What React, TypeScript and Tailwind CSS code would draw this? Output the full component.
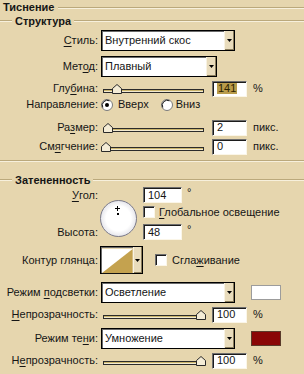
import React from "react";

const Etch = ({ className = "" }: { className?: string }) => (
  <div className={"h-[2px] border-t border-b border-t-[#bba97c] border-b-[#f7f0dc] " + className} />
);

const U = ({ pre = "", u, post = "" }: { pre?: string; u: string; post?: string }) => (
  <>
    {pre}
    <span className="underline underline-offset-2">{u}</span>
    {post}
  </>
);

const Label = ({ children }: { children: React.ReactNode }) => (
  <span className="w-[98px] shrink-0 text-right whitespace-nowrap">{children}</span>
);

const ArrowBtn = () => (
  <div className="w-[10px] h-full flex items-center justify-center bg-[#e9dcbc] border-l border-l-[#f8f2e2] shadow-[inset_-1px_-1px_0_#8a7d5c]">
    <svg width="5" height="3" viewBox="0 0 5 3">
      <path d="M0 0h5L2.5 3z" fill="#000" />
    </svg>
  </div>
);

const Select = ({ value, className }: { value: string; className: string }) => (
  <div className={"flex bg-white border border-black shadow-[inset_1px_1px_0_#6b6b6b] " + className}>
    <span className="flex-1 pl-[3px] flex items-center whitespace-nowrap overflow-hidden">{value}</span>
    <ArrowBtn />
  </div>
);

const Input = ({ children, className = "w-[35px]" }: { children: React.ReactNode; className?: string }) => (
  <div
    className={
      "h-[16px] bg-white flex items-center pl-[4px] border border-t-[#6e6e6e] border-l-[#6e6e6e] border-r-[#fbf6e8] border-b-[#fbf6e8] shadow-[inset_1px_1px_0_#1c1c1c] " +
      className
    }
  >
    {children}
  </div>
);

const Slider = ({ thumb }: { thumb: string }) => (
  <div className="relative w-[101px] h-[10px] ml-[2px]">
    <div className="absolute inset-x-0 top-[5px] h-[4px] bg-[#f3ead0] border border-[#2b2b2b] shadow-[inset_0_1px_0_#c9b36a]" />
    <svg className={"absolute top-0 " + thumb} width="10" height="10" viewBox="0 0 10 10">
      <path d="M0.5 9.5V4.5L5 0.5L9.5 4.5V9.5Z" fill="#f4ecd6" stroke="#2a2a2a" />
    </svg>
  </div>
);

const Check = () => (
  <div className="w-[12px] h-[12px] bg-white border border-t-[#6e6e6e] border-l-[#6e6e6e] border-r-[#fbf6e8] border-b-[#fbf6e8] shadow-[inset_1px_1px_0_#1c1c1c]" />
);

const Radio = ({ on }: { on?: boolean }) => (
  <svg width="12" height="12" viewBox="0 0 12 12">
    <circle cx="6" cy="6" r="5.5" fill="#fff" stroke="#7a7a7a" />
    <path d="M1.8 8.5A5 5 0 0 1 8.5 1.8" fill="none" stroke="#1c1c1c" />
    {on && <circle cx="6" cy="6" r="2" fill="#000" />}
  </svg>
);

export default function App() {
  return (
    <div className="w-[304px] h-[374px] overflow-hidden bg-[#e6d6ae] text-[#151515] text-[11px] leading-none font-['Liberation_Sans',Arial,sans-serif]">
      {/* Тиснение */}
      <div className="h-[14px] flex items-center pl-[3px]">
        <span className="font-bold pr-[4px]">Тиснение</span>
        <Etch className="flex-1 mt-[2px]" />
      </div>
      <div className="h-[14px] flex items-center">
        <Etch className="w-[12px]" />
        <span className="font-bold px-[3px]">Структура</span>
        <Etch className="flex-1" />
      </div>

      <div className="mt-[2px] h-[21px] flex items-center">
        <Label>
          <U u="С" post="тиль:" />
        </Label>
        <Select value="Внутренний скос" className="ml-[3px] w-[134px] h-[21px]" />
      </div>

      <div className="mt-[5px] h-[21px] flex items-center">
        <Label>
          <U pre="Мет" u="о" post="д:" />
        </Label>
        <Select value="Плавный" className="ml-[3px] w-[116px] h-[21px]" />
      </div>

      <div className="mt-[3px] h-[17px] flex items-center">
        <Label>
          <U pre="Глу" u="б" post="ина:" />
        </Label>
        <div className="ml-[3px] flex items-center">
          <Slider thumb="left-[9px]" />
          <Input className="w-[35px] ml-[8px]">
            <span className="bg-[#b99c4b] text-[#2b2200] px-[1px]">141</span>
          </Input>
          <span className="ml-[6px]">%</span>
        </div>
      </div>

      <div className="h-[15px] flex items-center">
        <Label>Направление:</Label>
        <div className="ml-[3px] flex items-center">
          <Radio on />
          <span className="ml-[5px]">Вверх</span>
          <span className="ml-[12px]">
            <Radio />
          </span>
          <span className="ml-[3px]">Вниз</span>
        </div>
      </div>

      <div className="mt-[7px] h-[17px] flex items-center">
        <Label>
          <U pre="Ра" u="з" post="мер:" />
        </Label>
        <div className="ml-[3px] flex items-center">
          <Slider thumb="left-0" />
          <Input className="w-[35px] ml-[8px]">2</Input>
          <span className="ml-[6px]">пикс.</span>
        </div>
      </div>

      <div className="mt-[2px] h-[17px] flex items-center">
        <Label>
          <U pre="См" u="я" post="гчение:" />
        </Label>
        <div className="ml-[3px] flex items-center">
          <Slider thumb="left-[-2px]" />
          <Input className="w-[35px] ml-[8px]">0</Input>
          <span className="ml-[6px]">пикс.</span>
        </div>
      </div>

      <Etch className="mt-[5px]" />

      {/* Затененность */}
      <div className="mt-[11px] h-[14px] flex items-center">
        <Etch className="w-[12px]" />
        <span className="font-bold px-[3px]">Затененность</span>
        <Etch className="flex-1" />
      </div>

      <div className="mt-[1px] h-[51px] flex">
        <div className="w-[98px] shrink-0 flex flex-col justify-between text-right">
          <div className="h-[14px] flex items-center justify-end">
            <U u="У" post="гол:" />
          </div>
          <div className="h-[14px] flex items-center justify-end">Высота:</div>
        </div>
        <div className="ml-[2px] mt-[12px] relative w-[37px] h-[37px] rounded-full border border-[#7a7a8a] bg-[radial-gradient(circle,#ffffff_50%,#e2e2e8_76%,#a5a5b2_100%)]">
          <svg className="absolute left-[14px] top-[5px]" width="5" height="5" viewBox="0 0 5 5">
            <path d="M2.5 0v5M0 2.5h5" stroke="#000" strokeWidth="1" />
          </svg>
          <div className="absolute left-[16px] top-[12px] w-[2px] h-[2px] bg-black" />
        </div>
        <div className="ml-[6px] flex flex-col">
          <div className="h-[14px] flex items-center">
            <Input className="w-[39px] h-[14px]">104</Input>
            <span className="ml-[5px] -mt-[6px]">°</span>
          </div>
          <div className="mt-[3px] h-[14px] flex items-center">
            <Check />
            <span className="ml-[4px]">
              <U u="Г" post="лобальное освещение" />
            </span>
          </div>
          <div className="mt-[6px] h-[14px] flex items-center">
            <Input className="w-[39px] h-[14px]">48</Input>
            <span className="ml-[5px] -mt-[6px]">°</span>
          </div>
        </div>
      </div>

      <div className="mt-[7px] h-[28px] flex items-center">
        <Label>Контур глянца:</Label>
        <div className="ml-[2px] w-[43px] h-[28px] flex border border-black shadow-[inset_1px_1px_0_#6b6b6b]">
          <svg width="33" height="26" viewBox="0 0 33 26" className="ml-px mt-px">
            <rect width="33" height="26" fill="#fff" />
            <path d="M0 26L33 0V26Z" fill="#c4a24f" />
          </svg>
          <ArrowBtn />
        </div>
        <div className="ml-[12px] flex items-center">
          <Check />
          <span className="ml-[5px]">
            <U pre="Сгла" u="ж" post="ивание" />
          </span>
        </div>
      </div>

      <div className="mt-[8px] h-[21px] flex items-center">
        <Label>
          <U pre="Режим " u="п" post="одсветки:" />
        </Label>
        <Select value="Осветление" className="ml-[3px] w-[134px] h-[21px]" />
        <div className="ml-[16px] w-[30px] h-[15px] bg-white border border-[#9c9c9c]" />
      </div>

      <div className="mt-[3px] h-[17px] flex items-center">
        <Label>
          <U u="Н" post="епрозрачность:" />
        </Label>
        <div className="ml-[3px] flex items-center">
          <Slider thumb="left-[93px]" />
          <Input className="w-[35px] ml-[8px]">100</Input>
          <span className="ml-[6px]">%</span>
        </div>
      </div>

      <div className="mt-[5px] h-[21px] flex items-center">
        <Label>
          <U pre="Режим те" u="н" post="и:" />
        </Label>
        <Select value="Умножение" className="ml-[3px] w-[134px] h-[21px]" />
        <div className="ml-[16px] w-[30px] h-[15px] bg-[#8a0606] border border-[#5a3a2a]" />
      </div>

      <div className="mt-[3px] h-[17px] flex items-center">
        <Label>
          <U pre="Н" u="е" post="прозрачность:" />
        </Label>
        <div className="ml-[3px] flex items-center">
          <Slider thumb="left-[93px]" />
          <Input className="w-[35px] ml-[8px]">100</Input>
          <span className="ml-[6px]">%</span>
        </div>
      </div>
    </div>
  );
}
